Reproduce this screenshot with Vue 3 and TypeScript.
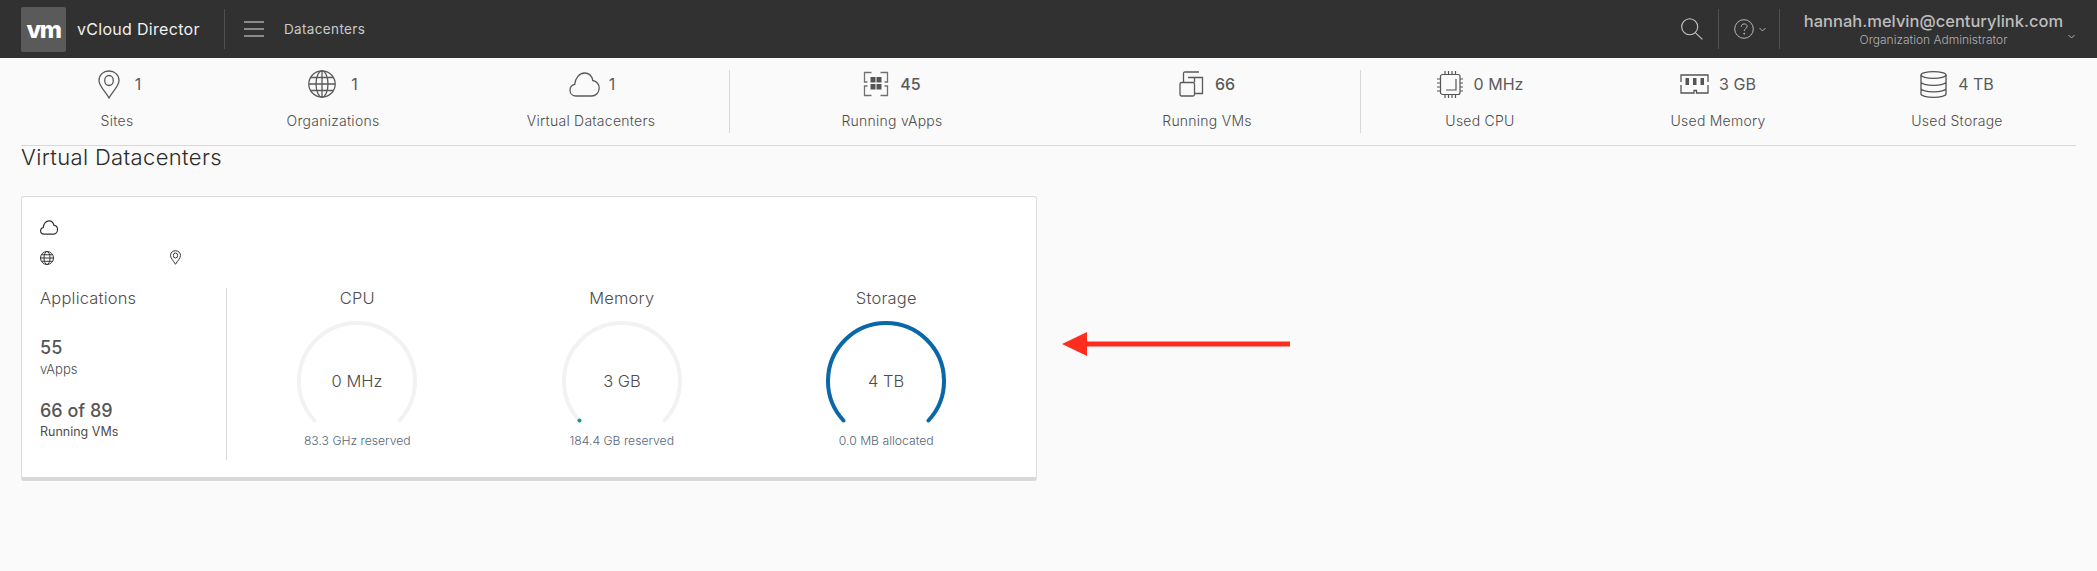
<script setup lang="ts">
interface Stat { icon: string; value: string; label: string; width: number; gap: number; strong?: boolean; shift?: number }
const groups: Stat[][] = [
  [
    { icon: 'pin', value: '1', label: 'Sites', width: 192, gap: 15, shift: 5 },
    { icon: 'globe', value: '1', label: 'Organizations', width: 240, gap: 15 },
    { icon: 'cloud', value: '1', label: 'Virtual Datacenters', width: 276, gap: 9, shift: 2 },
  ],
  [
    { icon: 'vapps', value: '45', label: 'Running vApps', width: 324, gap: 11, strong: true },
    { icon: 'vms', value: '66', label: 'Running VMs', width: 306, gap: 11, strong: true },
  ],
  [
    { icon: 'cpu', value: '0 MHz', label: 'Used CPU', width: 238, gap: 11 },
    { icon: 'memory', value: '3 GB', label: 'Used Memory', width: 238, gap: 10 },
    { icon: 'storage', value: '4 TB', label: 'Used Storage', width: 240, gap: 11 },
  ],
]
const gauges = [
  { title: 'CPU', value: '0 MHz', note: '83.3 GHz reserved', color: '', dot: false },
  { title: 'Memory', value: '3 GB', note: '184.4 GB reserved', color: '', dot: true },
  { title: 'Storage', value: '4 TB', note: '0.0 MB allocated', color: '#0a68a8', dot: false },
]
</script>

<template>
  <div class="page">
    <header class="topbar">
      <div class="logo">vm</div>
      <span class="product">vCloud Director</span>
      <span class="vsep first"></span>
      <svg class="burger" width="20" height="16" viewBox="0 0 20 16" fill="none" stroke="#a8a8a8" stroke-width="1.4">
        <path d="M0 1h20M0 8h20M0 15h20" />
      </svg>
      <span class="crumb">Datacenters</span>
      <span class="spacer"></span>
      <svg class="search" width="22" height="22" viewBox="0 0 22 22" fill="none" stroke="#c8c8c8" stroke-width="1.1">
        <circle cx="8.700" cy="8.700" r="8" />
        <path d="M14.500 14.800l6.900 6.500" />
      </svg>
      <span class="vsep"></span>
      <svg class="help" width="20" height="20" viewBox="0 0 20 20" fill="none" stroke="#b8b8b8" stroke-width="1">
        <circle cx="10" cy="10" r="9.300" />
        <path d="M7.200 7.800c0-1.800 1.300-2.900 3-2.900s2.900 1 2.900 2.500c0 2.300-2.900 2.300-2.900 4.600" />
        <circle cx="10.200" cy="14.700" r=".5" fill="#b8b8b8" />
      </svg>
      <svg class="chev" width="7" height="5" viewBox="0 0 7 5" fill="none" stroke="#b0b0b0" stroke-width="1">
        <path d="M.5 1l3 3 3-3" />
      </svg>
      <span class="vsep last"></span>
      <div class="user">
        <div class="email">hannah.melvin@centurylink.com</div>
        <div class="role">Organization Administrator</div>
      </div>
      <svg class="chev user-chev" width="7" height="5" viewBox="0 0 7 5" fill="none" stroke="#b0b0b0" stroke-width="1">
        <path d="M.5 1l3 3 3-3" />
      </svg>
    </header>

    <section class="stats">
      <div v-for="(group, g) in groups" :key="g" class="group">
        <div v-for="s in group" :key="s.label" class="stat" :style="{ width: s.width + 'px' }">
          <div class="stat-top" :style="{ gap: s.gap + 'px', paddingLeft: (s.shift || 0) + 'px' }">
            <svg v-if="s.icon === 'pin'" width="22" height="29" viewBox="0 0 22 29" fill="none" stroke="#5a5a5a" stroke-width="1.3">
              <path d="M11 28C7 21 1 16 1 10.500 1 4.800 5.400 1 11 1s10 3.800 10 9.500C21 16 15 21 11 28z" />
              <ellipse cx="11" cy="10.500" rx="4.300" ry="5" />
            </svg>
            <svg v-else-if="s.icon === 'globe'" width="28" height="28" viewBox="0 0 28 28" fill="none" stroke="#5a5a5a" stroke-width="1.300">
              <circle cx="14" cy="14" r="13.200" />
              <ellipse cx="14" cy="14" rx="6" ry="13.200" />
              <path d="M14 1v26M1 14h26M2.800 7.500h22.400M2.800 20.500h22.400" />
            </svg>
            <svg v-else-if="s.icon === 'cloud'" width="31" height="25" viewBox="0 0 31 25" fill="none" stroke="#5a5a5a" stroke-width="1.300">
              <path d="M7 24C3.500 24 1 21.500 1 18.200c0-3 2-5.200 4.700-5.800C6.200 6 10.400 1 15.500 1c4.300 0 7.400 3 8.300 7.500 3.700.5 6.400 3.700 6.400 7.500 0 4.500-3.300 8-7.700 8z" />
            </svg>
            <svg v-else-if="s.icon === 'vapps'" width="26" height="26" viewBox="0 0 26 26" fill="none" stroke="#707070" stroke-width="1.300">
              <path d="M8.500 1.500H1.500V11h3M17.500 1.500H24.500V11h-3M8.500 24.500H1.500V15h3M17.500 24.500H24.500V15h-3" />
              <g fill="#555" stroke="none">
                <rect x="7.500" y="6" width="5" height="5.500" /><rect x="13.500" y="6" width="5" height="5.500" />
                <rect x="7.500" y="13" width="5" height="5.500" /><rect x="13.500" y="13" width="5" height="5.500" />
              </g>
            </svg>
            <svg v-else-if="s.icon === 'vms'" width="25" height="26" viewBox="0 0 25 26" fill="none" stroke="#5a5a5a" stroke-width="1.300">
              <path d="M4.500 11V2.500Q4.500 1 6 1h14" />
              <path d="M15 22.500h8.500V6.500H9" />
              <path d="M15.500 11V6.500" />
              <rect x="1" y="11.500" width="14.500" height="13.500" rx="1.500" />
            </svg>
            <svg v-else-if="s.icon === 'cpu'" width="26" height="27" viewBox="0 0 26 27" fill="none" stroke="#555" stroke-width="1.200">
              <rect x="3.500" y="3.500" width="19.500" height="20" rx="2" />
              <path d="M8 0v3.500M11.500 0v3.500M15 0v3.500M18.500 0v3.500M8 23.500V27M11.500 23.500V27M15 23.500V27M18.500 23.500V27M0 8h3.500M0 12h3.500M0 16h3.500M0 20h3.500M23 8h3M23 12h3M23 16h3M23 20h3" />
              <path d="M19 8v11H9" />
            </svg>
            <svg v-else-if="s.icon === 'memory'" width="29" height="20" viewBox="0 0 29 20" fill="none" stroke="#555" stroke-width="1.300">
              <path d="M1 8V1h27v7M1 11v8h13v-2.500h2.500V19H28v-8" />
              <g fill="#555" stroke="none">
                <rect x="5.500" y="4" width="3.500" height="7" /><rect x="13" y="4" width="3.500" height="7" /><rect x="20.500" y="4" width="3.500" height="7" />
              </g>
            </svg>
            <svg v-else width="27" height="27" viewBox="0 0 27 27" fill="none" stroke="#555" stroke-width="1.300">
              <ellipse cx="13.500" cy="4" rx="12.500" ry="3.300" />
              <path d="M1 4v19c0 1.800 5.600 3.300 12.500 3.300S26 24.800 26 23V4M1 11c0 1.800 5.600 3.300 12.500 3.300S26 12.800 26 11M1 17.500c0 1.800 5.600 3.300 12.500 3.300S26 19.300 26 17.500" />
            </svg>
            <span class="stat-value" :class="{ strong: s.strong }">{{ s.value }}</span>
          </div>
          <div class="stat-label">{{ s.label }}</div>
        </div>
      </div>
    </section>

    <h1 class="title">Virtual Datacenters</h1>

    <article class="card">
      <svg class="card-cloud" width="18" height="15" viewBox="0 0 31 25" fill="none" stroke="#333" stroke-width="2">
        <path d="M7 24C3.500 24 1 21.500 1 18.200c0-3 2-5.200 4.700-5.800C6.200 6 10.400 1 15.500 1c4.300 0 7.400 3 8.300 7.500 3.700.5 6.400 3.700 6.400 7.500 0 4.500-3.300 8-7.700 8z" />
      </svg>
      <div class="card-meta">
        <svg width="14" height="14" viewBox="0 0 28 28" fill="none" stroke="#333" stroke-width="2">
          <circle cx="14" cy="14" r="13" />
          <ellipse cx="14" cy="14" rx="6" ry="13" />
          <path d="M1 14h26M2.800 7.500h22.400M2.800 20.500h22.400" />
        </svg>
        <svg width="11" height="15" viewBox="0 0 22 29" fill="none" stroke="#333" stroke-width="2">
          <path d="M11 28C7 21 1 16 1 10.500 1 4.800 5.400 1 11 1s10 3.800 10 9.500C21 16 15 21 11 28z" />
          <ellipse cx="11" cy="10.500" rx="4.300" ry="5" />
        </svg>
      </div>
      <div class="card-body">
        <div class="apps">
          <div class="section-title">Applications</div>
          <div class="metric first-metric">55</div>
          <div class="metric-label">vApps</div>
          <div class="metric second-metric">66 of 89</div>
          <div class="metric-label dark">Running VMs</div>
        </div>
        <div class="gauges">
          <div v-for="g in gauges" :key="g.title" class="gauge">
            <div class="section-title">{{ g.title }}</div>
            <svg class="arc" width="120" height="110" viewBox="0 0 120 110" fill="none">
              <path d="M17.500 99.500A58 58 0 1 1 102.500 99.500" stroke="#f2f2f2" stroke-width="4" stroke-linecap="round" />
              <path v-if="g.color" d="M17.500 99.500A58 58 0 1 1 102.500 99.500" :stroke="g.color" stroke-width="4" stroke-linecap="round" />
              <circle v-if="g.dot" cx="17.500" cy="99.500" r="2" fill="#0b9e8a" />
              <text x="60" y="65.500" text-anchor="middle" class="arc-value">{{ g.value }}</text>
            </svg>
            <div class="note">{{ g.note }}</div>
          </div>
        </div>
      </div>
    </article>

    <svg class="arrow" width="230" height="26" viewBox="0 0 230 26">
      <path d="M0 13L25 1v9.500h203v5H25V25z" fill="#ff2d1e" />
    </svg>
  </div>
</template>

<style>
body { margin: 0; background: #fafafa; }
</style>

<style scoped>
.page {
  position: relative;
  height: 571px;
  overflow: hidden;
  background: #fafafa;
  font-family: Inter, "Open Sans", sans-serif;
  color: #565656;
}
.topbar {
  display: flex;
  align-items: center;
  height: 58px;
  padding-left: 21px;
  background: #313131;
}
.logo {
  width: 45px;
  height: 45px;
  display: flex;
  align-items: center;
  justify-content: center;
  border-radius: 2px;
  background: #5a5a5a;
  color: #fff;
  font-size: 24px;
  font-weight: 800;
  letter-spacing: -1.5px;
}
.product {
  margin-left: 11px;
  width: 147px;
  color: #f0f0f0;
  font-size: 16px;
  font-weight: 400;
  letter-spacing: .3px;
  white-space: nowrap;
}
.vsep { width: 1px; height: 40px; background: #505050; }
.burger { margin-left: 19px; }
.crumb {
  margin-left: 20px;
  color: #c9c9c9;
  font-size: 13.500px;
  font-weight: 400;
  letter-spacing: .35px;
}
.spacer { flex: 1; }
.search { margin-right: 15px; }
.help { margin-left: 15px; }
.chev { margin-left: 5px; }
.help + .chev { margin-right: 13px; }
.user { margin-left: 23px; text-align: center; width: 261px; }
.email {
  color: #bdbdbd;
  font-size: 16.500px;
  font-weight: 500;
  line-height: 20px;
  white-space: nowrap;
}
.role {
  color: #b0b0b0;
  font-size: 12px;
  font-weight: 300;
  line-height: 15px;
  margin-top: 1px;
}
.user-chev { margin: 14px 22px 0 4px; }

.stats {
  display: flex;
  height: 75px;
  margin: 0 21px;
  padding-top: 12px;
  border-bottom: 1px solid #d8d8d8;
}
.group { display: flex; height: 63px; }
.group + .group { border-left: 1px solid #d8d8d8; }
.stat { display: flex; flex-direction: column; align-items: center; }
.stat-top {
  display: flex;
  align-items: center;
  height: 28px;
}
.stat-value { font-size: 16px; font-weight: 400; color: #5a5a5a; }
.stat-value.strong { font-weight: 500; }
.stat-label {
  margin-top: 14px;
  line-height: 18px;
  font-size: 14px;
  font-weight: 300;
  letter-spacing: .25px;
  color: #4d4d4d;
}
.title {
  margin: 0;
  padding-left: 21px;
  height: 50px;
  font-size: 22px;
  font-weight: 300;
  line-height: 23px;
  letter-spacing: .35px;
  color: #2b2b2b;
}
.card {
  width: 1016px;
  height: 285px;
  margin-left: 21px;
  padding: 23px 0 0 18px;
  box-sizing: border-box;
  background: #fff;
  border: 1px solid #dcdcdc;
  border-bottom: 4px solid #d8d8d8;
  border-radius: 3px;
}
.card-cloud { display: block; }
.card-meta {
  display: flex;
  gap: 116px;
  margin-top: 15px;
  align-items: center;
}
.card-body { display: flex; margin-top: 23px; height: 172px; }
.apps { width: 186px; border-right: 1px solid #dcdcdc; }
.section-title {
  font-size: 16.500px;
  font-weight: 300;
  line-height: 20px;
  letter-spacing: .2px;
  color: #4d4d4d;
}
.metric { font-size: 18px; font-weight: 500; line-height: 24px; color: #565656; }
.first-metric { margin-top: 28px; }
.second-metric { margin-top: 22px; }
.metric-label { font-size: 13px; font-weight: 300; line-height: 16px; margin-top: 1px; color: #4d4d4d; }
.metric-label.dark { font-size: 12.500px; font-weight: 400; }
.gauges { display: flex; margin-left: -2px; }
.gauge {
  width: 264.500px;
  display: flex;
  flex-direction: column;
  align-items: center;
}
.arc { margin-top: 13px; display: block; }
.arc-value { font-family: Inter, "Open Sans", sans-serif; font-size: 16.500px; font-weight: 300; fill: #4d4d4d; }
.note { margin-top: 2px; font-size: 12.200px; font-weight: 300; line-height: 16px; color: #55657a; }
.arrow { position: absolute; left: 1062px; top: 331px; }
</style>
